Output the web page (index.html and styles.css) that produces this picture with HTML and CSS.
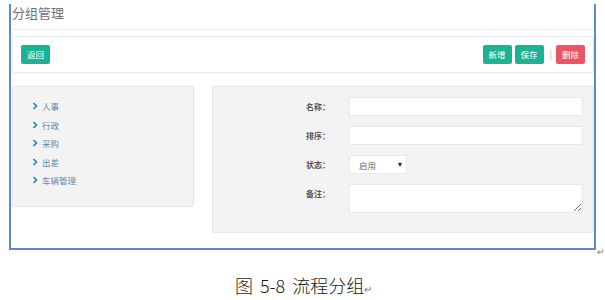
FILE: index.html
```html
<!DOCTYPE html>
<html lang="zh">
<head>
<meta charset="utf-8">
<link rel="stylesheet" href="styles.css">
</head>
<body>
<div class="doc">
  <div class="frame">
    <div class="title">分组管理</div>
    <div class="toolbar">
      <button class="btn btn-green">返回</button>
      <div class="actions">
        <button class="btn btn-green">新增</button>
        <button class="btn btn-green">保存</button>
        <span class="sep">|</span>
        <button class="btn btn-red">删除</button>
      </div>
    </div>
    <div class="main">
      <ul class="tree">
        <li><svg class="chev" viewBox="0 0 6 8"><polyline points="1.5,1 4.5,4 1.5,7"/></svg>人事</li>
        <li><svg class="chev" viewBox="0 0 6 8"><polyline points="1.5,1 4.5,4 1.5,7"/></svg>行政</li>
        <li><svg class="chev" viewBox="0 0 6 8"><polyline points="1.5,1 4.5,4 1.5,7"/></svg>采购</li>
        <li><svg class="chev" viewBox="0 0 6 8"><polyline points="1.5,1 4.5,4 1.5,7"/></svg>出差</li>
        <li><svg class="chev" viewBox="0 0 6 8"><polyline points="1.5,1 4.5,4 1.5,7"/></svg>车辆管理</li>
      </ul>
      <div class="form">
        <label class="lbl">名称<span class="colon">：</span></label>
        <div class="input"></div>
        <label class="lbl">排序<span class="colon">：</span></label>
        <div class="input"></div>
        <label class="lbl">状态<span class="colon">：</span></label>
        <div class="cell"><div class="select"><span>启用</span><span class="arrow"></span></div></div>
        <label class="lbl lbl-top">备注<span class="colon">：</span></label>
        <textarea class="textarea"></textarea>
      </div>
    </div>
  </div>
  <span class="ret">↵</span>
</div>
<p class="caption">图 5-8 流程分组<span class="ret2">↵</span></p>
</body>
</html>
```

FILE: styles.css
```css
* { box-sizing: border-box; }
html, body { margin: 0; padding: 0; background: #fff; }
body {
  font-family: "Noto Sans CJK SC", "Noto Sans", sans-serif;
  width: 605px;
  height: 300px;
  overflow: hidden;
}
.doc {
  display: flex;
  align-items: flex-end;
  padding-left: 9px;
  padding-top: 4px;
}
.frame {
  width: 588px;
  height: 246px;
  border-left: 2px solid #5a8ad0;
  border-right: 2px solid #5a8ad0;
  border-bottom: 2px solid #5a8ad0;
  padding: 0 0 0 1px;
}
.ret {
  font-size: 9px;
  color: #777;
  line-height: 8px;
  margin-bottom: -6px;
  margin-left: 1px;
}
.title {
  height: 26px;
  border-bottom: 1px solid #eceeef;
  font-size: 13px;
  line-height: 16px;
  color: #707070;
  padding-top: 1px;
}
.toolbar {
  margin-top: 6px;
  height: 37px;
  border: 1px solid #e9eaeb;
  border-radius: 2px;
  box-shadow: 0 1px 1px rgba(0,0,0,0.04);
  display: flex;
  align-items: center;
  justify-content: space-between;
  padding: 0 8px 0 8px;
}
.actions { display: flex; align-items: center; gap: 3px; }
.btn {
  font-family: inherit;
  border: none;
  border-radius: 2px;
  color: #fff;
  font-size: 8.5px;
  height: 19px;
  width: 29px;
  padding: 0;
  line-height: 19px;
  text-align: center;
}
.btn-green { background: #1ab394; }
.btn-red { background: #ed5565; }
.sep { color: #bbb; font-size: 9px; margin: 0 1px 0 3px; }
.main {
  margin-top: 13px;
  display: flex;
  gap: 18px;
  align-items: flex-start;
}
.tree {
  list-style: none;
  margin: 0;
  width: 182px;
  height: 121px;
  background: #f3f3f4;
  border: 1px solid #e6e6e6;
  border-radius: 2px;
  padding: 10px 0 0 19px;
}
.tree li {
  display: flex;
  align-items: center;
  height: 18.5px;
  font-size: 8.5px;
  color: #6688aa;
}
.chev {
  width: 6px;
  height: 8px;
  margin-right: 4px;
  fill: none;
  stroke: #1c84c6;
  stroke-width: 1.6;
}
.form {
  width: 382px;
  height: 147px;
  background: #f3f3f4;
  border: 1px solid #e6e6e6;
  border-radius: 2px;
  padding: 10px 10px 0 0;
  display: grid;
  grid-template-columns: 117px 234px;
  column-gap: 19px;
  row-gap: 10px;
  grid-auto-rows: min-content;
}
.lbl {
  font-size: 8px;
  color: #555;
  font-weight: bold;
  text-align: right;
  align-self: center;
}
.colon { display: inline-block; width: 8px; text-align: right; }
.lbl-top { align-self: start; padding-top: 4px; }
.input {
  height: 19px;
  background: #fff;
  border: 1px solid #e8e8e8;
}
.cell { display: flex; }
.select {
  width: 58px;
  height: 19px;
  background: #fff;
  border: 1px solid #e8e8e8;
  border-radius: 2px;
  display: flex;
  align-items: center;
  justify-content: space-between;
  padding: 0 4px 0 9px;
  font-size: 8.5px;
  color: #666;
}
.arrow {
  width: 0; height: 0;
  border-left: 2.5px solid transparent;
  border-right: 2.5px solid transparent;
  border-top: 4px solid #222;
}
.textarea {
  display: block;
  height: 29px;
  width: 234px;
  background: #fff;
  border: 1px solid #e8e8e8;
  margin: 0;
  padding: 0;
  resize: both;
  font-family: inherit;
}
.caption {
  margin: 24px 0 0 235px;
  font-family: "Noto Sans CJK SC", sans-serif;
  font-weight: 300;
  font-size: 18px;
  word-spacing: 3px;
  color: #1a1a1a;
  line-height: 22px;
}
.ret2 { font-size: 10px; color: #777; }
```
